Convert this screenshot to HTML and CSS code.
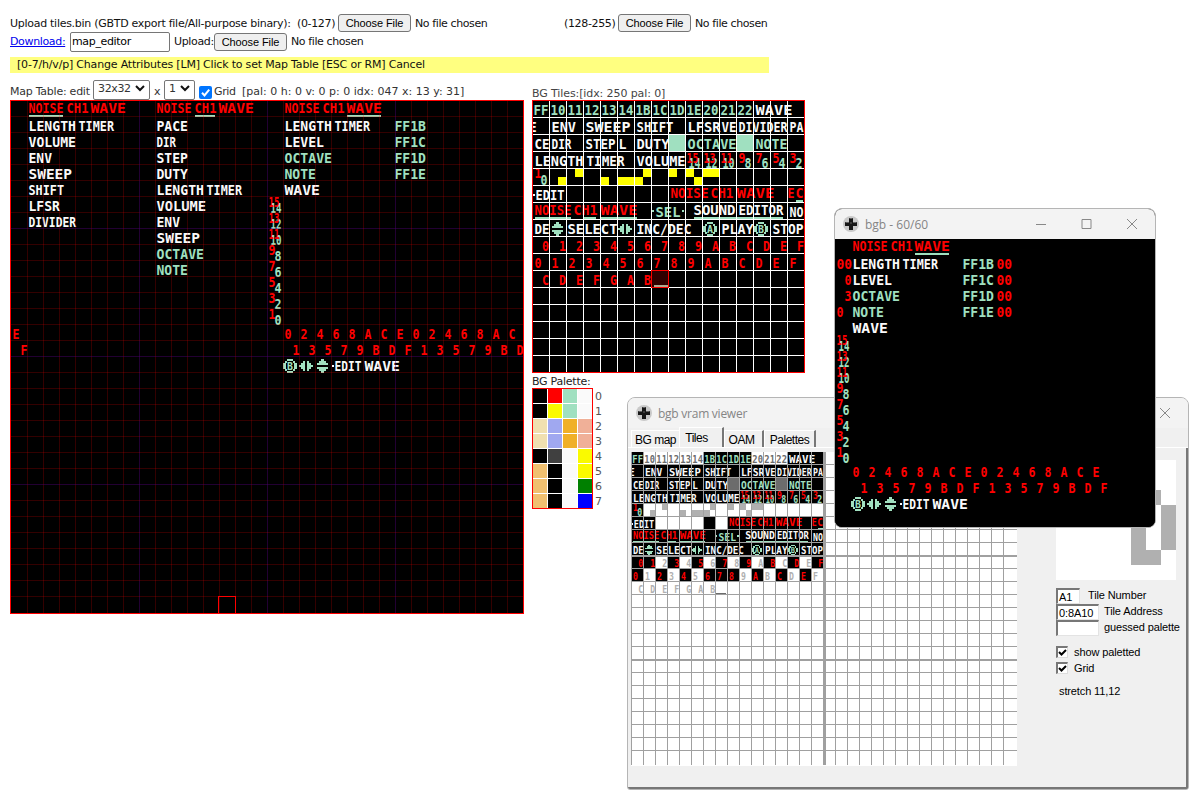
FILE: index.html
```html
<!DOCTYPE html>
<html lang="en">
<head>
<meta charset="utf-8">
<title>Map editor</title>
<link rel="stylesheet" href="styles.css">
</head>
<body>
<main class="page">
  <div class="row row-upload">
    <span class="fit w-upload">Upload tiles.bin (GBTD export file/All-purpose binary):</span>
    <span class="fit w-range">(0-127)</span><button class="file">Choose File</button><span class="none">No file chosen</span>
    <span class="fit w-range2">(128-255)</span><button class="file">Choose File</button><span class="none">No file chosen</span>
  </div>
  <div class="row row-download">
    <a class="fit w-download" href="#">Download:</a>
    <input class="name" type="text" value="map_editor">
    <span class="fit w-up">Upload:</span><button class="file">Choose File</button><span class="none">No file chosen</span>
  </div>
  <div class="hint">[0-7/h/v/p] Change Attributes [LM] Click to set Map Table [ESC or RM] Cancel</div>
  <div class="columns">
    <section class="map-col">
      <div class="row row-map">
        <span class="w-maplabel">Map Table: edit</span>
        <span class="select s-size">32x32<svg viewBox="0 0 10 7"><path d="M1 1l4 4 4-4"/></svg></span>
        <span class="w-x">x</span>
        <span class="select s-one">1<svg viewBox="0 0 10 7"><path d="M1 1l4 4 4-4"/></svg></span>
        <span class="check"><svg viewBox="0 0 13 13"><path d="M3 6.8l2.5 2.6L10.2 3.6"/></svg></span>
        <span class="w-grid">Grid</span>
        <span class="status">[pal: 0 h: 0 v: 0 p: 0 idx: 047 x: 13 y: 31]</span>
      </div>
      <svg id="map" class="pix" width="514" height="514" viewBox="10 100 514 514"></svg>
    </section>
    <section class="tile-col">
      <div class="tiles-label">BG Tiles:[idx: 250 pal: 0]</div>
      <svg id="tiles" class="pix" width="273" height="273" viewBox="532 100 273 273"></svg>
      <div class="pal-label">BG Palette:</div>
      <div class="palette-row">
        <div class="palette" id="palette"></div>
        <div class="pal-nums"><span>0</span><span>1</span><span>2</span><span>3</span><span>4</span><span>5</span><span>6</span><span>7</span></div>
      </div>
    </section>
  </div>
</main>

<div class="window vram">
  <div class="titlebar">
    <svg class="app-icon" viewBox="0 0 16 16"><circle cx="8" cy="8" r="8" fill="#c9c9c9"/><path d="M6 2h4v4h4v4h-4v4H6v-4H2V6h4z" fill="#171717"/><path d="M6.5 2.5h3M2.5 6.5h3.5M10 6.5h3.5M7 7h2" stroke="#777" stroke-width=".8"/></svg>
    <span class="title">bgb vram viewer</span>
    <svg class="close" viewBox="0 0 10 10"><path d="M0 0l10 10M10 0L0 10"/></svg>
  </div>
  <div class="tabs">
    <span class="tab t1">BG map</span><span class="tab t2 active">Tiles</span><span class="tab t3">OAM</span><span class="tab t4">Palettes</span>
  </div>
  <div class="panel">
    <svg id="vram" class="pix" width="386" height="314" viewBox="631 452 386 314"></svg>
    <div class="side">
      <svg class="preview" viewBox="0 0 8 8"><path d="M0 0h8v8H0z" fill="#fff"/><path d="M5 2h2v1H6v3h1V3h1v3H7v1H5z" fill="#b0b0b0"/></svg>
      <div class="field"><span class="box b1">A1</span><span class="f1">Tile Number</span></div>
      <div class="field"><span class="box">0:8A10</span><span>Tile Address</span></div>
      <div class="field"><span class="box"></span><span>guessed palette</span></div>
      <div class="opt first"><span class="cb"><svg viewBox="0 0 9 9"><path d="M1 4l2.5 2.5L8 2"/></svg></span>show paletted</div>
      <div class="opt"><span class="cb"><svg viewBox="0 0 9 9"><path d="M1 4l2.5 2.5L8 2"/></svg></span>Grid</div>
      <div class="stretch">stretch 11,12</div>
    </div>
  </div>
</div>

<div class="window game">
  <div class="titlebar">
    <svg class="app-icon" viewBox="0 0 16 16"><circle cx="8" cy="8" r="8" fill="#c9c9c9"/><path d="M6 2h4v4h4v4h-4v4H6v-4H2V6h4z" fill="#171717"/><path d="M6.5 2.5h3M2.5 6.5h3.5M10 6.5h3.5M7 7h2" stroke="#777" stroke-width=".8"/></svg>
    <span class="title">bgb - 60/60</span>
    <svg class="controls" viewBox="0 0 102 12"><path d="M0 6.5h10M46 1.5h9v9h-9zM91 1l10 10M101 1L91 11"/></svg>
  </div>
  <svg id="game" class="pix" width="320" height="288" viewBox="267 101 320 288"></svg>
</div>
<script src="app.js"></script>
</body>
</html>
```
FILE: styles.css
```css
* { box-sizing: border-box; }
body { margin: 0; width: 1200px; height: 804px; overflow: hidden; position: relative; background: #fff; font: 11px "DejaVu Sans", Verdana, sans-serif; color: #111; }
.page { padding: 14px 10px 0; }
.row { display: flex; align-items: center; white-space: nowrap; }
.row-upload { height: 18px; }
.row-download { height: 19px; }
.fit, .none, .row-map { letter-spacing: -0.35px; }
.fit.w-upload { width: 287px; letter-spacing: -0.28px; }
.w-range { width: 41px; }
.w-range2 { width: 54px; margin-left: 76px; }
.w-download { width: 60px; color: #00e; }
.w-up { width: 40px; margin-left: 4px; }
.file { width: 73px; height: 18px; padding: 0; border: 1px solid #767676; border-radius: 3px; background: #efefef; font: 11px "Liberation Sans", Arial, sans-serif; letter-spacing: -0.1px; color: #000; }
.none { margin-left: 4px; width: 73px; letter-spacing: -0.4px; }
.name { width: 100px; height: 20px; padding: 1px 1px; border: 1px solid #767676; border-radius: 2px; font: 11px "DejaVu Sans", sans-serif; letter-spacing: -0.35px; }
.hint { margin-top: 6px; width: 759px; height: 16px; padding-left: 7px; line-height: 15px; background: #ffff80; white-space: nowrap; letter-spacing: -0.19px; }
.columns { display: flex; gap: 8px; }
.map-col { width: 514px; }
.tile-col { width: 273px; }
.row-map { height: 27px; padding-top: 6px; color: #333; }
.w-maplabel { width: 83px; padding-top: 4px; letter-spacing: -0.25px; }
.select { display: flex; align-items: center; justify-content: space-between; height: 20px; padding: 0 4px 2px; border: 1px solid #767676; border-radius: 2px; background: #fff; }
.select svg { width: 10px; height: 7px; fill: none; stroke: #111; stroke-width: 2; }
.s-size { width: 57px; }
.s-one { width: 31px; }
.w-x { width: 14px; padding: 4px 0 0 4px; }
.check { width: 13px; height: 13px; margin: 5px 2px 0 4px; border-radius: 2px; background: #0075ff; }
.check svg { display: block; fill: none; stroke: #fff; stroke-width: 2; }
.w-grid { width: 28px; padding-top: 4px; }
.status { padding-top: 4px; letter-spacing: 0; }
.tiles-label { height: 27px; padding-top: 14px; line-height: 13px; color: #444; letter-spacing: -0.1px; }
.pal-label { height: 15px; padding-top: 2px; line-height: 13px; color: #222; letter-spacing: -0.25px; }
.palette-row { display: flex; gap: 2px; }
.palette { width: 61px; height: 121px; display: grid; grid-template-columns: repeat(4, 14px); grid-auto-rows: 14px; gap: 1px; border: 1px solid #f00; background: #fff; }
.pal-nums { display: flex; flex-direction: column; color: #555; line-height: 15px; padding-top: 1px; }
.pix { display: block; }
.px { font-family: "DejaVu Sans Mono", monospace; font-weight: bold; font-size: 13.6px; }
.window { position: absolute; border: 1px solid #b5b5b5; border-radius: 8px; overflow: hidden; }
.titlebar { display: flex; align-items: center; background: #f3f3f3; color: #858585; font: 12px "Open Sans", "Noto Sans", sans-serif; }
.titlebar svg { fill: none; stroke: #888; stroke-width: 1; }
.titlebar .app-icon { width: 16px; height: 16px; stroke: none; }
.title { margin-left: 6px; flex: 1; letter-spacing: -0.25px; }
.vram { left: 627px; top: 397px; width: 562px; height: 393px; border-radius: 8px 8px 3px 3px; background: #f0f0f0; font: 11px "Liberation Sans", Arial, sans-serif; color: #000; }
.vram .titlebar { height: 30px; padding: 0 18px 0 8px; }
.close { width: 10px; height: 10px; }
.game { left: 834px; top: 208px; width: 322px; height: 320px; background: #000; }
.game .titlebar { height: 30px; padding: 0 17px 0 8px; }
.game .title { letter-spacing: 0; }
.controls { width: 102px; height: 12px; }
.tabs { display: flex; align-items: flex-end; height: 20px; padding-left: 3px; border-bottom: 1px solid #fff; font-size: 12px; letter-spacing: -0.5px; }
.tab { height: 17px; padding-top: 2px; border-top: 1px solid #fff; border-right: 2px solid #777; border-left: 1px solid #fff; text-align: center; }
.t1 { width: 48px; border-right: 0; }
.t2 { width: 45px; height: 20px; padding: 3px 9px 0 0; }
.t3 { width: 40px; padding-right: 4px; }
.t4 { width: 52px; }
.panel { display: flex; gap: 39px; height: 341px; padding: 4px 0 0 3px; border-right: 2px solid #777; border-bottom: 2px solid #777; }
.side { padding-top: 8px; white-space: nowrap; letter-spacing: -0.12px; }
.preview { display: block; width: 120px; height: 120px; margin-bottom: 8px; shape-rendering: crispEdges; }
.field { display: flex; height: 16px; gap: 5px; line-height: 15px; }
.box { width: 43px; height: 16px; padding-left: 1px; line-height: 15px; background: #fff; border: 1px solid #e3e3e3; border-top: 2px solid #777; border-left: 2px solid #777; }
.b1 { width: 24px; }
.f1 { margin-left: 3px; }
.opt { display: flex; align-items: center; gap: 6px; height: 16px; }
.first { margin-top: 8px; }
.cb { width: 12px; height: 12px; background: #fff; border: 1px solid #ddd; border-top: 2px solid #777; border-left: 2px solid #777; }
.cb svg { display: block; width: 9px; height: 9px; fill: none; stroke: #000; stroke-width: 2; }
.stretch { margin: 9px 0 0 3px; }
```
FILE: app.js
```js
const RED = '#ff0000', GREEN = '#a0e0c0', WHITE = '#fafafa', DARK = '#6c6c6c', LIGHT = '#b0b0b0';
const rect = (x, y, w, h, fill, extra = '') =>
  `<rect x="${x}" y="${y}" width="${w}" height="${h}" fill="${fill}" shape-rendering="crispEdges" ${extra}/>`;
const text = (x, base, s, end, fill) =>
  `<text class="px" x="${x - 0.5}" y="${base}" textLength="${end - x + 1}" lengthAdjust="spacingAndGlyphs" fill="${fill}">${s}</text>`;
// A single narrow glyph in a 6px wide slot.
const glyph = (x, base, s, fill) => text(x, base, s, x + 6, fill);

const buttonIcon = (x, y, letter) =>
  `<path d="M${x + 4} ${y}h6v2h2v2h2v6h-2v2h-2v2h-6v-2h-2v-2h-2v-6h2v-2h2z" fill="${GREEN}" shape-rendering="crispEdges"/>` +
  rect(x + 4, y + 2, 6, 10, '#000') + rect(x + 3, y + 4, 8, 6, '#000') +
  `<text class="px" x="${x + 4}" y="${y + 10.5}" style="font-size:10.5px" textLength="6" lengthAdjust="spacingAndGlyphs" fill="${GREEN}">${letter}</text>`;
const sideArrows = (x, y) =>
  `<path d="M${x} ${y + 6}h2v-2h2v-2h2v10h-2v-2h-2v-2h-2zM${x + 14} ${y + 6}h-2v-2h-2v-2h-2v10h2v-2h2v-2h2z" fill="${GREEN}" shape-rendering="crispEdges"/>`;
const upDownArrows = (x, y) =>
  `<path d="M${x} ${y + 6}v-2h2v-2h2v-2h3v2h2v2h2v2zM${x} ${y + 8}v2h2v2h2v2h3v-2h2v-2h2v-2z" fill="${GREEN}" shape-rendering="crispEdges"/>`;

const heading = (x, active) => {
  const u = { noise: [0, 34], ch: [38, 20], wave: [62, 34] }[active];
  return text(x, 113, 'NOISE', x + 34, RED) + text(x + 38, 113, 'CH1', x + 59, RED) +
    text(x + 62, 113, 'WAVE', x + 96.5, RED) + rect(x + u[0], 115, u[1], 2, GREEN);
};
const lengthTimer = (x, y) => text(x, y, 'LENGTH', x + 46.5, WHITE) + text(x + 50, y, 'TIMER', x + 84.5, WHITE);
const list = (x, first, items) => items.map(([s, w, c], i) =>
  s === 'LT' ? lengthTimer(x, first + 16 * i) : text(x, first + 16 * i, s, x + w, c || WHITE)).join('');

function waveScreen(columns) {
  let o = heading(285, 'wave');
  o += list(285, 131, [['LT'], ['LEVEL', 38.5], ['OCTAVE', 46.5, GREEN], ['NOTE', 30.5, GREEN], ['WAVE', 34.5]]);
  ['FF1B', 'FF1C', 'FF1D', 'FF1E'].forEach((s, i) => { o += text(395, 131 + 16 * i, s, 425.5, GREEN); });
  for (let i = 0; i < 8; i++) {
    const hi = 15 - 2 * i, lo = hi - 1, y = 207 + 16 * i;
    o += lo > 9 ? text(271, y + 6, lo, 281, GREEN) : glyph(275, y + 6, lo, GREEN);
    o += hi > 9 ? text(269, y, hi, 279, RED) : glyph(269, y, hi, RED);
  }
  [...'02468ACE02468ACE'].slice(0, columns).forEach((s, i) => { o += glyph(285 + 16 * i, 339, s, RED); });
  [...'13579BDF13579BDF'].slice(0, columns).forEach((s, i) => { o += glyph(293 + 16 * i, 355, s, RED); });
  o += buttonIcon(283, 359, 'B') + sideArrows(299, 359) + upDownArrows(317, 359);
  o += rect(332, 365, 2, 2, WHITE) + text(335, 371, 'EDIT', 361, WHITE) + text(365, 371, 'WAVE', 399.5, WHITE);
  return o;
}

function mapTable() {
  let o = rect(10, 100, 514, 514, '#000');
  o += heading(29, 'noise') + heading(157, 'ch');
  o += list(29, 131, [['LT'], ['VOLUME', 46.5], ['ENV', 22.5], ['SWEEP', 42.5], ['SHIFT', 34.5], ['LFSR', 30.5], ['DIVIDER', 46.5]]);
  o += list(157, 131, [['PACE', 30.5], ['DIR', 18.5], ['STEP', 30.5], ['DUTY', 30.5], ['LT'], ['VOLUME', 48.5], ['ENV', 22.5], ['SWEEP', 42.5], ['OCTAVE', 46.5, GREEN], ['NOTE', 30.5, GREEN]]);
  o += waveScreen(15);
  o += glyph(13, 339, 'E', RED) + glyph(21, 355, 'F', RED);
  for (let i = 0; i < 31; i++) {
    const c = i % 8 === 7 ? 'rgba(80,0,120,.42)' : 'rgba(255,0,0,.2)';
    o += rect(27 + 16 * i, 101, 1, 512, c) + rect(11, 116 + 16 * i, 512, 1, c);
  }
  o += rect(218.5, 596.5, 17, 17, 'none', 'stroke="#f00"') + rect(10.5, 100.5, 513, 513, 'none', 'stroke="#f00"');
  return o;
}

// Tile sheet contents. In paletted VRAM view some tiles use a greyscale palette.
function sheet(vram) {
  let o = '';
  const white = vram ? {
    0: [1, 2, 3, 4, 5, 10, 11, 12], 4: [1, 2, 3, 4, 5, 6, 7, 8, 9, 10, 11, 12, 13, 14, 15], 5: [2, 3, 4, 5, 7],
    8: [2, 4, 6, 8, 10, 12, 14], 9: [1, 3, 5, 9, 11, 13, 15], 10: [...Array(16).keys()]
  } : {};
  const isWhite = (r, c) => (white[r] || []).includes(c);
  for (let r in white) for (const c of white[r]) o += rect(533 + 17 * c, 101 + 17 * r, 17, 17, '#fff');
  const T = (x, y, s, e, c = WHITE) => { o += text(x, y, s, e, c); };
  T(534, 115, 'FF', 548, GREEN);
  ['10', '11', '12', '13', '14', '1B', '1C', '1D', '1E', '20', '21', '22'].forEach((s, i) =>
    T(551 + 17 * i, 115, s, 565 + 17 * i, isWhite(0, i + 1) ? DARK : GREEN));
  T(756, 115, 'WAVE', 792);
  T(531, 132, 'E', 536); T(552, 132, 'ENV', 575.5); T(586, 132, 'SWEEP', 630); T(637, 132, 'SHIFT', 673);
  T(688, 132, 'LFSR', 720); T(722, 132, 'VE', 736); T(739, 132, 'DIVIDER', 787); T(790, 132, 'PA', 803);
  T(535, 149, 'CE', 549); T(552, 149, 'DIR', 571); T(586, 149, 'STEP', 615); T(619, 149, 'L', 626); T(637, 149, 'DUTY', 669);
  const block = vram ? DARK : GREEN;
  o += rect(669, 135, 16, 16, block) + rect(737, 135, 16, 16, block);
  T(688, 149, 'OCTAVE', 736, GREEN); T(756, 149, 'NOTE', 787, GREEN);
  T(535, 166, 'LENGTH', 583); T(587, 166, 'TIMER', 624); T(637, 166, 'VOLUME', 685);
  for (let i = 0; i < 7; i++) {
    const x = 687 + 17 * i, hi = 15 - 2 * i, lo = hi - 1;
    if (lo > 9) T(x + 2, 168, lo, x + 13, GREEN); else o += glyph(x + 7, 168, lo, GREEN);
    if (hi > 9) T(x, 162.5, hi, x + 11, RED); else o += glyph(x + 1, 162.5, hi, RED);
  }
  o += glyph(535, 178, '1', RED) + glyph(541, 184.5, '0', GREEN);
  const y = vram ? LIGHT : '#ffff00';
  [[558, 1, 8], [575, 0, 8], [601, 1, 8], [618, 1, 16], [635, 1, 8], [643, 0, 8], [669, 0, 8], [686, 0, 8], [694, 1, 8], [703, 0, 16]]
    .forEach(([x, b, w]) => { o += rect(x, 169 + 8 * b, w, 8, y); });
  o += rect(533, 194, 2, 2, WHITE);
  T(536, 200, 'EDIT', 564); T(671, 198, 'NOISE', 708, RED); T(711, 198, 'CH1', 733, RED); T(737, 198, 'WAVE', 774, RED);
  T(788, 198, 'E', 794, RED); T(796, 198, 'C', 803, RED); o += rect(796, 200, 7, 2, GREEN);
  T(535, 215, 'NOISE', 571, RED); T(574, 215, 'CH1', 597, RED); T(601, 215, 'WAVE', 637, RED);
  o += rect(535, 217, 36, 2, GREEN) + rect(584, 217, 12, 2, GREEN) + rect(601, 217, 36, 2, GREEN) + rect(694, 217, 89, 2, GREEN);
  o += rect(652, 210, 2, 2, GREEN) + rect(682, 210, 2, 2, GREEN);
  T(656, 217, 'SEL', 680, GREEN); T(694, 215, 'SOUND', 735); T(739, 215, 'EDITOR', 783); T(790, 217, 'NO', 803);
  T(535, 234, 'DE', 549); T(568, 234, 'SELECT', 617); T(637, 234, 'INC/DEC', 691); T(722, 234, 'PLAY', 753); T(773, 234, 'STOP', 803);
  o += upDownArrows(552, 222) + sideArrows(618, 222) + buttonIcon(703, 222, 'A') + buttonIcon(754, 222, 'B');
  [...'0123456789ABCDEF'].forEach((s, i) => {
    o += glyph(542.5 + 17 * i, 251, s, isWhite(8, i) ? LIGHT : RED) + glyph(535 + 17 * i, 268, s, isWhite(9, i) ? LIGHT : RED);
  });
  [...'CDEFGAB'].forEach((s, i) => { o += glyph(542.5 + 17 * i, 285, s, vram ? LIGHT : RED); });
  if (vram) o += rect(652, 285, 14, 2, DARK);
  return o;
}

function bgTiles() {
  let o = rect(532, 100, 273, 273, '#000') + sheet(false);
  for (let i = 0; i < 15; i++) o += rect(549 + 17 * i, 101, 1, 271, '#fff') + rect(533, 117 + 17 * i, 271, 1, '#fff');
  o += rect(651.5, 270.5, 17, 17, '#300000', 'stroke="#f00"') + rect(654, 285, 14, 2, '#b0a890');
  return o + rect(532.5, 100.5, 272, 272, 'none', 'stroke="#f00"');
}

function vramTiles() {
  let o = rect(631, 452, 386, 314, '#fff') + rect(632, 452, 192, 130, '#000');
  o += `<g transform="translate(632 452) scale(${12 / 17} ${13 / 17}) translate(-533 -101)">${sheet(true)}</g>`;
  for (let i = 0; i < 32; i++) o += rect(631 + 12 * i, 452, 1, 313, '#a0a0a0');
  for (let i = 1; i <= 23; i++) o += rect(632, 451 + 13 * i, 385, i % 8 ? 1 : 2, '#a0a0a0');
  return o + rect(823, 452, 3, 313, '#a0a0a0');
}

function gameScreen() {
  let o = rect(267, 101, 320, 288, '#000') + waveScreen(16);
  o += text(269, 131, '00', 283.5, RED) + glyph(277, 147, '0', RED) + glyph(277, 163, '3', RED) + glyph(269, 179, '0', RED);
  for (let i = 0; i < 4; i++) o += text(429, 131 + 16 * i, '00', 443.5, RED);
  return o;
}

document.getElementById('map').innerHTML = mapTable();
document.getElementById('tiles').innerHTML = bgTiles();
document.getElementById('vram').innerHTML = vramTiles();
document.getElementById('game').innerHTML = gameScreen();

const palettes = ['#000 #f00 #a0e0c0 #fafafa', '#000 #fafa00 #a0e0c0 #fafafa', '#f0e0b0 #a0a8f0 #f0b028 #f0b098', '#f0e0b0 #a0a8f0 #f0b028 #f0b098',
  '#000 #404040 #fafafa #fafa00', '#f0c070 #000 #fafafa #fafa00', '#f0c070 #000 #fafafa #008000', '#f0c070 #000 #fafafa #0000ff'];
document.getElementById('palette').innerHTML = palettes.flatMap(p => p.split(' ')).map(c => `<i style="background:${c}"></i>`).join('');
```
